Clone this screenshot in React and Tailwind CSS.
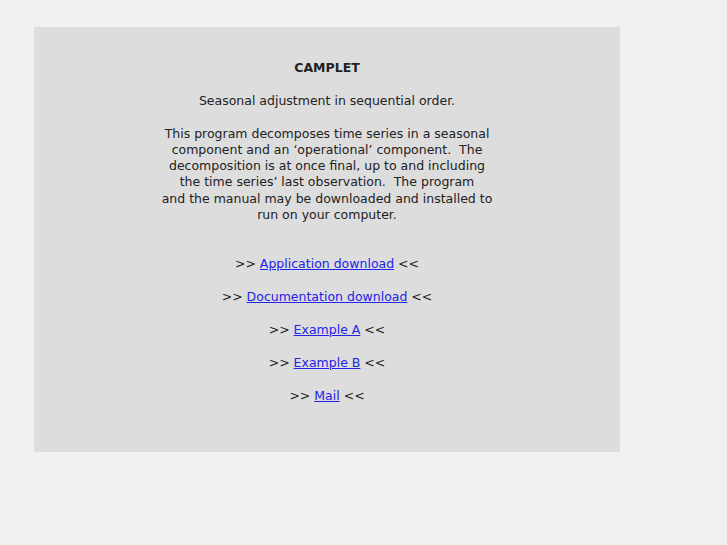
import React from "react";

const links = ["Application download", "Documentation download", "Example A", "Example B", "Mail"];

export default function App() {
  return (
    <div className="min-h-[545px] bg-[#f0f0f0] pt-[27px] pl-[34px] font-['DejaVu_Sans',sans-serif] text-[12.5px] text-[#222]">
      <div className="w-[586px] h-[425px] bg-[#dddddd] pt-[33px] text-center leading-[16.3px]">
        <p className="font-bold">CAMPLET</p>
        <p className="mt-[17px]">Seasonal adjustment in sequential order.</p>
        <p className="mt-[16px]">
          This program decomposes time series in a seasonal
          <br />
          component and an ‘operational’ component.&nbsp; The
          <br />
          decomposition is at once final, up to and including
          <br />
          the time series’ last observation.&nbsp; The program
          <br />
          and the manual may be downloaded and installed to
          <br />
          run on your computer.
        </p>
        <div className="mt-[33px] flex flex-col gap-[16.5px]">
          {links.map((l) => (
            <p key={l}>
              &gt;&gt; <a href="#" className="text-[#2323e8] underline">{l}</a> &lt;&lt;
            </p>
          ))}
        </div>
      </div>
    </div>
  );
}
